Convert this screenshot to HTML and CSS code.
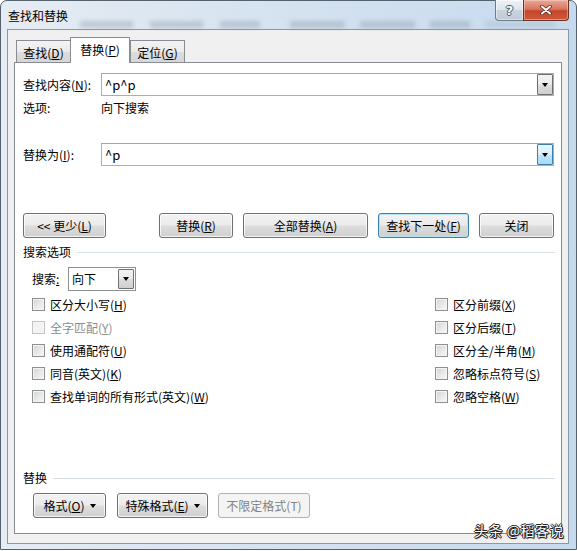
FILE: index.html
```html
<!DOCTYPE html>
<html lang="zh-CN">
<head>
    <meta charset="UTF-8">
    <meta name="viewport" content="width=device-width, initial-scale=1.0">
    <title>查找和替换</title>
    <link rel="stylesheet" href="styles.css">
</head>
<body>
    <div class="window">
        <div class="titlebar">
            <div class="title-row">
                <span class="title">查找和替换</span>
                <div class="caption">
                    <div class="cap-btn help">?</div>
                    <div class="cap-btn close">
                        <svg width="12" height="10" viewBox="0 0 12 10">
                            <path d="M2 1.5 L10 8.5 M10 1.5 L2 8.5" stroke="#5a2a22" stroke-width="3.6" stroke-linecap="round"/>
                            <path d="M2 1.5 L10 8.5 M10 1.5 L2 8.5" stroke="#fff" stroke-width="2" stroke-linecap="round"/>
                        </svg>
                    </div>
                </div>
            </div>
            <div class="glass">
                <span class="blob w53"></span>
                <span class="blob w53 gap17"></span>
                <span class="blob w40 gap17"></span>
                <span class="blob w55 gap30"></span>
                <span class="blob w55 gap15"></span>
                <span class="blob w40 gap15"></span>
                <span class="blob w70 gap15 faint"></span>
            </div>
        </div>

        <div class="client">
            <div class="tabs">
                <div class="tab">查找(<u>D</u>)</div>
                <div class="tab active">替换(<u>P</u>)</div>
                <div class="tab">定位(<u>G</u>)</div>
            </div>

            <div class="panel">
                <div class="field-row first">
                    <span class="field-label">查找内容(<u>N</u>):</span>
                    <div class="combo">
                        <span class="combo-text">^p^p</span>
                        <span class="drop"><i class="arrow"></i></span>
                    </div>
                </div>
                <div class="info-row">
                    <span class="field-label">选项:</span>
                    <span>向下搜索</span>
                </div>
                <div class="field-row replace">
                    <span class="field-label">替换为(<u>I</u>):</span>
                    <div class="combo">
                        <span class="combo-text">^p</span>
                        <span class="drop hot"><i class="arrow"></i></span>
                    </div>
                </div>

                <div class="button-row">
                    <div class="btn w-less">&lt;&lt; 更少(<u>L</u>)</div>
                    <div class="btn w-replace">替换(<u>R</u>)</div>
                    <div class="btn w-all">全部替换(<u>A</u>)</div>
                    <div class="btn w-next default">查找下一处(<u>F</u>)</div>
                    <div class="btn w-close">关闭</div>
                </div>

                <div class="group-head search-head">
                    <span>搜索选项</span>
                    <span class="rule"></span>
                </div>

                <div class="search-row">
                    <span class="search-label">搜索<u>:</u></span>
                    <div class="select">
                        <span class="select-text">向下</span>
                        <span class="drop"><i class="arrow"></i></span>
                    </div>
                </div>

                <div class="checks">
                    <label class="check"><span class="box"></span>区分大小写(<u>H</u>)</label>
                    <label class="check"><span class="box"></span>区分前缀(<u>X</u>)</label>
                    <label class="check disabled"><span class="box"></span>全字匹配(<u>Y</u>)</label>
                    <label class="check"><span class="box"></span>区分后缀(<u>T</u>)</label>
                    <label class="check"><span class="box"></span>使用通配符(<u>U</u>)</label>
                    <label class="check"><span class="box"></span>区分全/半角(<u>M</u>)</label>
                    <label class="check"><span class="box"></span>同音(英文)(<u>K</u>)</label>
                    <label class="check"><span class="box"></span>忽略标点符号(<u>S</u>)</label>
                    <label class="check"><span class="box"></span>查找单词的所有形式(英文)(<u>W</u>)</label>
                    <label class="check"><span class="box"></span>忽略空格(<u>W</u>)</label>
                </div>

                <div class="group-head replace-head">
                    <span>替换</span>
                    <span class="rule"></span>
                </div>

                <div class="button-row bottom">
                    <div class="btn w-format">格式(<u>O</u>) <i class="arrow"></i></div>
                    <div class="btn w-special">特殊格式(<u>E</u>) <i class="arrow"></i></div>
                    <div class="btn w-noformat disabled">不限定格式(T)</div>
                </div>
            </div>
        </div>

        <div class="watermark">头条 @稻客说</div>
    </div>
</body>
</html>
```

FILE: styles.css
```css
* { box-sizing: border-box; }
body {
    margin: 0;
    background: #fff;
    font-family: "Noto Sans CJK SC", "Microsoft YaHei", sans-serif;
    font-size: 12px;
    color: #000;
}
u { text-decoration: underline; text-underline-offset: 1px; }

.window {
    position: relative;
    width: 577px;
    height: 550px;
    border: 1px solid #55616d;
    border-radius: 7px 7px 0 0;
    padding: 0 7px 5px 6px;
    display: flex;
    flex-direction: column;
    background: linear-gradient(90deg, #e6ecf3 0%, #d6e3f0 45%, #c6daee 100%);
}

/* title bar */
.titlebar { height: 28px; flex: none; }
.title-row { display: flex; height: 20px; }
.title { padding-left: 1px; margin-top: 7px; line-height: 16px; height: 16px; color: #000; }
.caption { margin-left: auto; margin-top: -1px; display: flex; height: 21px; }
.cap-btn { height: 21px; display: flex; align-items: center; justify-content: center; }
.help {
    width: 28px;
    border: 1px solid #6d7a88;
    border-top: none;
    border-right: none;
    border-radius: 0 0 0 4px;
    background: linear-gradient(#eef2f7 0%, #dde4ec 50%, #c9d3de 51%, #c2ccd8 100%);
    box-shadow: inset 0 0 0 1px rgba(255,255,255,0.5);
    color: #fff;
    font-family: "DejaVu Sans", sans-serif;
    font-weight: bold;
    font-size: 13px;
    text-shadow: 1px 0 0 #4a5360, -1px 0 0 #4a5360, 0 1px 0 #4a5360, 0 -1px 0 #4a5360;
}
.close {
    width: 46px;
    border: 1px solid #6b3025;
    border-top: none;
    border-radius: 0 0 4px 0;
    background: linear-gradient(#e9a99a 0%, #d9765f 45%, #c5452a 55%, #cf5a3c 100%);
    box-shadow: inset 0 0 0 1px rgba(255,220,210,0.45);
}
.glass { display: flex; height: 8px; padding-left: 73px; }
.blob {
    display: block;
    height: 7px;
    background: rgba(115, 128, 142, 0.3);
    filter: blur(2px);
}
.blob.faint { background: rgba(115, 128, 142, 0.15); }
.w40 { width: 40px; }
.w53 { width: 53px; }
.w55 { width: 55px; }
.w70 { width: 70px; }
.gap15 { margin-left: 15px; }
.gap17 { margin-left: 17px; }
.gap30 { margin-left: 30px; }

/* client area */
.client {
    flex: 1;
    border: 1px solid #8b99a7;
    background: #f0f0f0;
    padding: 7px 6px 9px 6px;
    display: flex;
    flex-direction: column;
}

.tabs {
    display: flex;
    align-items: flex-end;
    height: 25px;
    padding-left: 2px;
    position: relative;
    z-index: 1;
}
.tab {
    height: 22px;
    width: 55px;
    border: 1px solid #898c95;
    border-bottom: none;
    background: linear-gradient(#f3f3f3 0%, #ebebeb 50%, #dddddd 51%, #d6d6d6 100%);
    display: flex;
    align-items: center;
    justify-content: center;
    padding-top: 2px;
    line-height: 16px;
}
.tab.active {
    width: 60px;
    height: 26px;
    margin-bottom: -1px;
    background: #fff;
    padding-top: 0;
    padding-bottom: 1px;
}
.tab + .tab { margin-left: -1px; }
.tab.active + .tab { margin-left: 0; }

.panel {
    flex: 1;
    border: 1px solid #898c95;
    background: #fff;
    padding: 0 7px 0 8px;
    display: flex;
    flex-direction: column;
}

.field-row { display: flex; align-items: center; height: 23px; }
.field-row.first { margin-top: 10px; }
.field-row.replace { margin-top: 27px; }
.field-label { width: 78px; flex: none; line-height: 16px; }
.info-row { display: flex; height: 16px; line-height: 16px; margin-top: 4px; }

.combo {
    flex: 1;
    height: 23px;
    border: 1px solid #abadb3;
    border-top-color: #a3a5aa;
    display: flex;
}
.combo-text { flex: 1; padding-left: 3px; line-height: 21px; font-size: 13px; }
.drop {
    width: 16px;
    flex: none;
    border: 1px solid #707070;
    border-radius: 1px;
    background: linear-gradient(#f2f2f2 0%, #ebebeb 50%, #dddddd 51%, #cfcfcf 100%);
    display: flex;
    align-items: center;
    justify-content: center;
}
.drop.hot {
    border-color: #3c7fb1;
    background: linear-gradient(#eaf6fd 0%, #d9f0fc 50%, #bee6fd 51%, #a7d9f5 100%);
}
.arrow {
    display: inline-block;
    width: 0;
    height: 0;
    border-left: 3.5px solid transparent;
    border-right: 3.5px solid transparent;
    border-top: 4px solid #000;
}

/* buttons */
.button-row { display: flex; height: 25px; margin-top: 47px; }
.button-row.bottom { margin-top: 7px; padding-left: 10px; }
.btn {
    height: 25px;
    border: 1px solid #707070;
    border-radius: 3px;
    background: linear-gradient(#f2f2f2 0%, #ebebeb 48%, #dddddd 52%, #cfcfcf 100%);
    box-shadow: inset 0 0 0 1px rgba(255, 255, 255, 0.75);
    display: flex;
    align-items: center;
    justify-content: center;
    line-height: 16px;
    flex: none;
}
.btn .arrow { margin-left: 5px; }
.btn.default {
    border-color: #3c7fb1;
    box-shadow: inset 0 0 0 1px #b7e3f7;
}
.btn.disabled {
    border-color: #adb2b5;
    background: #f4f4f4;
    box-shadow: none;
    color: #838383;
}
.w-less { width: 83px; }
.w-replace { width: 74px; margin-left: 53px; }
.w-all { width: 125px; margin-left: 10px; }
.w-next { width: 91px; margin-left: 10px; }
.w-close { width: 75px; margin-left: 10px; }
.w-format { width: 73px; }
.w-special { width: 91px; margin-left: 11px; }
.w-noformat { width: 92px; margin-left: 10px; }

/* group headers */
.group-head { display: flex; align-items: center; height: 16px; line-height: 16px; }
.group-head .rule { flex: 1; height: 1px; background: #d5dfe5; margin-left: 6px; margin-right: -1px; }
.search-head { margin-top: 6px; }
.replace-head { margin-top: 62px; }

.search-row { display: flex; align-items: center; height: 24px; margin-top: 7px; padding-left: 9px; }
.search-label { width: 36px; line-height: 16px; }
.select {
    width: 68px;
    height: 24px;
    border: 1px solid #8e8f8f;
    display: flex;
    padding: 1px;
}
.select-text { flex: 1; padding-left: 2px; line-height: 20px; }
.select .drop { width: 16px; }

/* checkboxes */
.checks {
    display: grid;
    grid-template-columns: 403px 1fr;
    grid-auto-rows: 23px;
    margin-top: 2px;
    padding-left: 9px;
}
.check { display: flex; align-items: center; line-height: 16px; }
.box {
    width: 13px;
    height: 13px;
    flex: none;
    margin-right: 5px;
    border: 1px solid #8e8f8f;
    background: linear-gradient(135deg, #cfd2d6 0%, #e6e7e9 50%, #f8f8f8 100%);
    box-shadow: inset 0 0 0 1px #f4f4f4;
}
.check.disabled { color: #8d8d8d; }
.check.disabled .box { border-color: #c4c4c4; background: #f3f3f3; }

/* watermark drawn over the frame */
.watermark {
    position: absolute;
    right: 12px;
    bottom: 10px;
    color: #fff;
    font-size: 14px;
    line-height: 17px;
    letter-spacing: 0.5px;
    text-shadow: 1px 0 0 #222, -1px 0 0 #222, 0 1px 0 #222, 0 -1px 0 #222, 1px 1px 1px #000;
}
```
